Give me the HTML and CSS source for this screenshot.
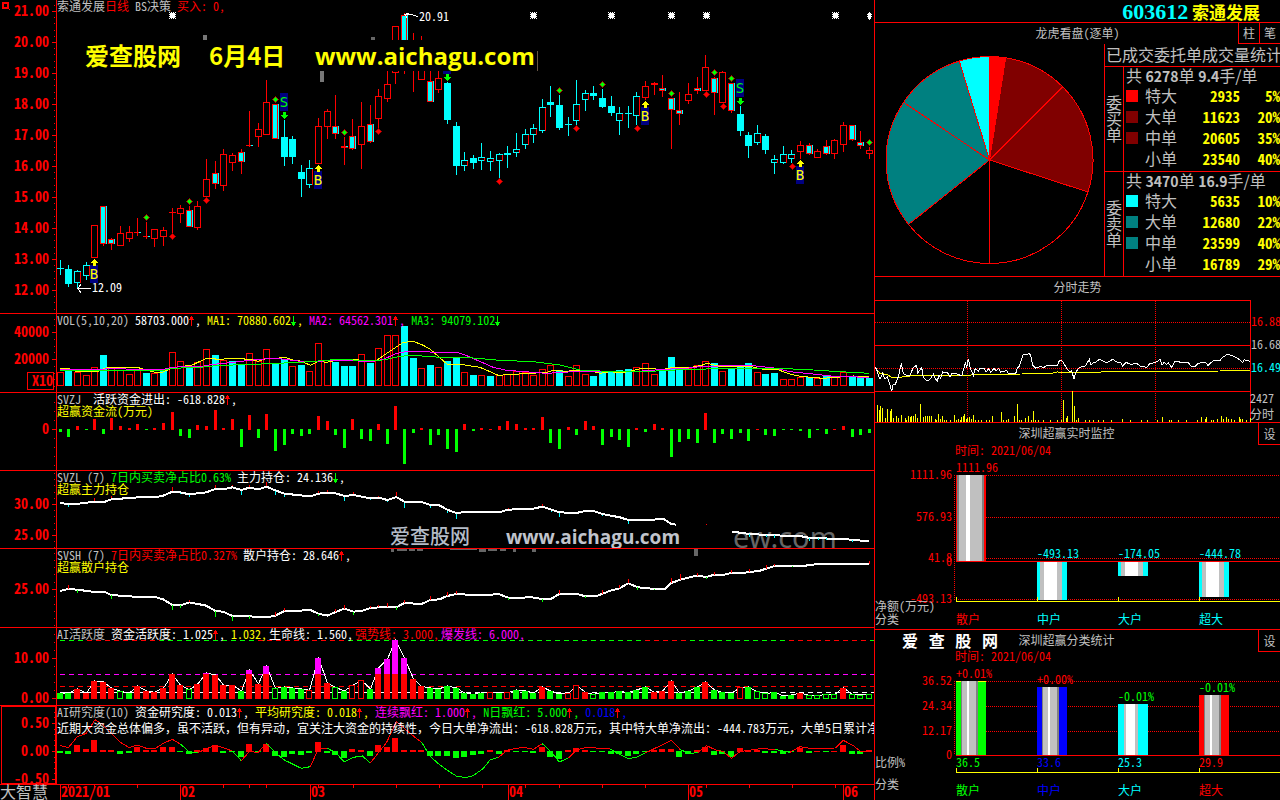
FILE: index.html
```html
<!DOCTYPE html>
<html lang="zh-CN">
<head>
<meta charset="utf-8">
<title>索通发展 603612</title>
<link rel="stylesheet" href="styles.css">
</head>
<body>
<main class="terminal">
  <div class="history">
    <section class="panel panel-first">
      <svg class="chart" id="price" viewBox="0 0 874 313"></svg>
      <header class="legend"><p><span class="gray">索通发展</span><span class="red">日线</span> <span class="gray">BS决策</span> <span class="red">买入: 0,</span></p></header>
    </section>
    <section class="panel">
      <svg class="chart" id="volume" viewBox="0 314 874 78"></svg>
      <header class="legend"><p><span class="gray">VOL(5,10,20)</span> 58703.000<i class="up"></i>, <span class="yellow">MA1: 70880.602<i class="down"></i>,</span> <span class="magenta">MA2: 64562.301<i class="up"></i>,</span> <span class="green">MA3: 94079.102<i class="down"></i></span></p></header>
    </section>
    <section class="panel">
      <svg class="chart" id="flow" viewBox="0 393 874 77"></svg>
      <header class="legend"><p><span class="gray">SVZJ</span>  活跃资金进出: -618.828<i class="up"></i>,</p><p class="yellow">超赢资金流(万元)</p></header>
    </section>
    <section class="panel">
      <svg class="chart" id="major" viewBox="0 471 874 77"></svg>
      <header class="legend"><p><span class="gray">SVZL (7)</span> <span class="green">7日内买卖净占比0.63%</span> 主力持仓: 24.136<i class="down"></i>,</p><p class="yellow">超赢主力持仓</p></header>
    </section>
    <section class="panel">
      <svg class="chart" id="retail" viewBox="0 549 874 78"></svg>
      <header class="legend"><p><span class="gray">SVSH (7)</span> <span class="red">7日内买卖净占比0.327%</span> 散户持仓: 28.646<i class="up"></i>,</p><p class="yellow">超赢散户持仓</p></header>
    </section>
    <section class="panel">
      <svg class="chart" id="activity" viewBox="0 628 874 77"></svg>
      <header class="legend"><p><span class="gray">AI活跃度</span> 资金活跃度: 1.025<i class="up"></i>, <span class="yellow plain">1.032,</span><span class="plain">生命线: 1.560,</span><span class="red plain">强势线: 3.000,</span><span class="magenta">爆发线: 6.000,</span></p></header>
    </section>
    <section class="panel">
      <svg class="chart" id="research" viewBox="0 706 874 78"></svg>
      <header class="legend"><p><span class="gray">AI研究度(10)</span> 资金研究度: 0.013<i class="up"></i>, <span class="yellow">平均研究度: 0.018<i class="up"></i>,</span> <span class="magenta">连续飘红: 1.000<i class="up"></i>,</span> <span class="green">N日飘红: 5.000<i class="up"></i>,</span> <span class="blue">0.018<i class="up"></i>,</span></p>
      <p class="comment">近期大资金总体偏多，虽不活跃，但有异动，宜关注大资金的持续性，今日大单净流出：-618.828万元，其中特大单净流出：-444.783万元，大单5日累计净流出</p></header>
    </section>
    <footer class="panel">
      <svg class="chart" id="months" viewBox="0 785 874 15"></svg>
    </footer>
  </div>

  <div class="quote">
    <h1 class="stock"><span class="code">603612</span> <span class="name">索通发展</span></h1>
    <section class="orders">
      <div class="title-row title-wide"><h2>龙虎看盘(逐单)</h2><button type="button">柱</button><button type="button">笔</button></div>
      <div class="orders-body">
        <svg class="chart" id="pie" viewBox="875 44 229 232"></svg>
        <div class="stats">
          <h3>已成交委托单成交量统计</h3>
          <div class="side">
            <p class="side-name">委买单</p>
            <table>
              <caption>共 <b>6278</b>单 <b>9.4</b>手/单</caption>
              <tr><td><i class="swatch s-red"></i></td><th>特大</th><td>2935</td><td>5%</td></tr>
              <tr><td><i class="swatch s-maroon"></i></td><th>大单</th><td>11623</td><td>20%</td></tr>
              <tr><td><i class="swatch s-maroon"></i></td><th>中单</th><td>20605</td><td>35%</td></tr>
              <tr><td></td><th>小单</th><td>23540</td><td>40%</td></tr>
            </table>
          </div>
          <div class="side">
            <p class="side-name">委卖单</p>
            <table>
              <caption>共 <b>3470</b>单 <b>16.9</b>手/单</caption>
              <tr><td><i class="swatch s-cyan"></i></td><th>特大</th><td>5635</td><td>10%</td></tr>
              <tr><td><i class="swatch s-teal"></i></td><th>大单</th><td>12680</td><td>22%</td></tr>
              <tr><td><i class="swatch s-teal"></i></td><th>中单</th><td>23599</td><td>40%</td></tr>
              <tr><td></td><th>小单</th><td>16789</td><td>29%</td></tr>
            </table>
          </div>
        </div>
      </div>
    </section>
    <section class="intraday">
      <h2>分时走势</h2>
      <svg class="chart" id="intraday" viewBox="875 300 405 122"></svg>
    </section>
    <section class="monitor">
      <div class="title-row"><h2>深圳超赢实时监控</h2><button type="button">设</button></div>
      <svg class="chart" id="monitor" viewBox="875 445 405 184"></svg>
    </section>
    <section class="monitor">
      <div class="title-row"><h2>深圳超赢分类统计</h2><button type="button">设</button></div>
      <p class="brand">爱 查 股 网</p>
      <svg class="chart" id="share" viewBox="875 652 405 148"></svg>
    </section>
  </div>
</main>
<script src="charts.js"></script>
</body>
</html>
```

FILE: styles.css
```css
* { box-sizing: border-box; margin: 0; padding: 0; }

body {
  background: #000;
  color: #fff;
  font: 12px/12px "Noto Sans Mono CJK SC", "Noto Sans CJK SC", monospace;
  overflow-x: hidden;
}

.terminal { display: grid; grid-template-columns: minmax(0, 875fr) minmax(0, 405fr); }
.history { border-right: 1px solid #f00; min-width: 0; }
.chart { display: block; width: 100%; height: auto; overflow: hidden; }
.chart text { white-space: pre; }
#share, #months { overflow: visible; }

.panel { display: grid; border-top: 1px solid #f00; }
.panel-first { border-top: 0; }
.panel > * { grid-area: 1 / 1; min-width: 0; }
.legend { padding-left: 57px; overflow-x: clip; }
.legend p { white-space: pre; }
.legend .comment { margin-top: 4px; }
.plain { margin-right: 2px; }

.gray { color: #c0c0c0; }
.red { color: #f00; }
.yellow { color: #ff0; }
.green { color: #0f0; }
.magenta { color: #f0f; }
.blue { color: #00f; }

.up, .down { display: inline-block; width: 5px; height: 10px; margin-right: 1px; vertical-align: -1px; }
.up { background: linear-gradient(#f00, #f00) center / 1px 100% no-repeat, linear-gradient(#f00, #f00) center 1px / 3px 3px no-repeat, linear-gradient(#f00, #f00) center 3px / 5px 1px no-repeat; }
.down { background: linear-gradient(#0f0, #0f0) center / 1px 100% no-repeat, linear-gradient(#0f0, #0f0) center 6px / 3px 3px no-repeat, linear-gradient(#0f0, #0f0) center 6px / 5px 1px no-repeat; }

h2, h3 { font-weight: 400; color: #c0c0c0; }
h2 { font-size: 12px; text-align: center; }

.stock {
  height: 23px;
  padding-right: 20px;
  border-bottom: 1px solid #f00;
  text-align: right;
  white-space: nowrap;
  font: 700 17px/23px "Noto Sans CJK SC", sans-serif;
}
.stock .code { color: #0ff; font: 700 22px/23px "Liberation Serif", serif; }
.stock .name { color: #ff0; }

.title-row { display: flex; }
.title-row h2 { flex: 1; line-height: 20px; }
.title-wide h2 { padding-left: 42px; }
.title-row button {
  width: 22px;
  height: 22px;
  background: #000;
  color: #c0c0c0;
  border: 0 solid #f00;
  border-width: 0 0 1px 1px;
  font: inherit;
}
.title-wide button { width: 21px; height: 21px; }

.orders { border-bottom: 1px solid #f00; }
.orders-body { display: grid; grid-template-columns: minmax(0, 229fr) minmax(0, 176fr); }
.stats { border-left: 1px solid #f00; overflow: hidden; white-space: nowrap; }
.stats h3 { font-size: 16px; line-height: 20px; height: 23px; padding-left: 1px; border-bottom: 1px solid #f00; }
.side { display: flex; }
.side + .side { border-top: 1px solid #f00; }
.side-name {
  width: 19px;
  padding: 27px 2px 0 1px;
  border-right: 1px solid #f00;
  color: #c0c0c0;
  font-size: 16px;
  line-height: 16px;
  white-space: normal;
  word-break: break-all;
}
.side table { flex: 1; border-collapse: collapse; table-layout: fixed; font-size: 16px; color: #c0c0c0; }
.side caption { height: 18px; line-height: 16px; text-align: left; padding-left: 2px; font-family: "Noto Sans CJK SC", sans-serif; }
.side caption b { font-size: 14px; }
.side th { font-weight: 400; text-align: left; }
.side td, .side th { height: 21px; line-height: 21px; }
.side td:nth-child(1) { width: 21px; padding-left: 2px; }
.side th { width: 32px; }
.side td:nth-child(n+3) { color: #ff0; font-weight: 700; font-size: 15px; text-align: right; }
.side td:nth-child(3) { width: 63px; }
.side table { margin-bottom: 2px; }
.swatch { display: block; width: 12px; height: 12px; }
.s-red { background: #f00; }
.s-maroon { background: #800000; }
.s-cyan { background: #0ff; }
.s-teal { background: #008080; }

.intraday { border-bottom: 1px solid #f00; }
.intraday h2 { height: 23px; line-height: 19px; }
.monitor { position: relative; }
.monitor + .monitor { border-top: 1px solid #f00; }
.brand {
  position: absolute;
  left: 27px;
  top: 1px;
  font: 700 16px/18px "Noto Sans CJK SC", sans-serif;
  word-spacing: 7px;
}
```

FILE: charts.js
```js
const NS = "http://www.w3.org/2000/svg";
const R = "#f00", C = "#0ff", G = "#0f0", Y = "#ff0", M = "#f0f", W = "#fff", S = "#c0c0c0";
const MONO = '"Noto Sans Mono CJK SC", "Noto Sans CJK SC", monospace';

function pen(id) {
  const svg = document.getElementById(id);
  const add = (tag, attrs) => {
    const el = document.createElementNS(NS, tag);
    for (const k in attrs) el.setAttribute(k, attrs[k]);
    svg.appendChild(el);
    return el;
  };
  return {
    add,
    rect: (x, y, w, h, fill) => add("rect", { x, y, width: w, height: Math.max(h, 1), fill, "shape-rendering": "crispEdges" }),
    box: (x, y, w, h, stroke, fill) => add("rect", { x: x + .5, y: y + .5, width: w - 1, height: Math.max(h - 1, 1), fill: fill || "#000", stroke, "shape-rendering": "crispEdges" }),
    line: (pts, stroke, w) => add("polyline", { points: pts.map(p => p.join(",")).join(" "), fill: "none", stroke, "stroke-width": w || 1, "shape-rendering": "crispEdges" }),
    dash: (x1, y1, x2, y2, stroke, d) => add("line", { x1, y1, x2, y2, stroke, "stroke-dasharray": d || "1 1", "shape-rendering": "crispEdges" }),
    text: (x, mid, s, fill, size, extra) => {
      size = size || 12;
      const el = add("text", Object.assign({ x, y: mid + Math.round(size * .36), fill, "font-size": size, "font-family": MONO }, extra));
      el.textContent = s;
      return el;
    }
  };
}

/* Day number to column; the data below is sampled on a grid of thirds. */
const col = i => 60 + Math.floor(i * 8.606 + .3);
const third = v => Math.floor(v / 3);
const pairs = (s, oy) => s.trim().split(/\s+/).map(p => {
  const [x, y] = p.split(",").map(Number);
  return [x / 3, oy + y / 3];
});

function axis(p, top, bottom, ticks, origin, step) {
  p.rect(56, top, 1, bottom - top, R);
  for (let y = origin; y < bottom; y += step) if (y > top) p.rect(54, Math.round(y), 1, 1, R);
  for (let y = origin; y > top; y -= step) if (y < bottom) p.rect(54, Math.round(y), 1, 1, R);
  ticks.forEach(([s, y]) => {
    p.rect(52, y, 4, 1, R);
    p.text(49, y, s, R, 14, { "text-anchor": "end", "font-weight": 700 });
  });
}

/* ---- price ---- */
const candles = `c780,804,809,825 c795,807,852,861 h810,813,849,865 h788,795,828,840 r675,675,774,774 m618,618,732,738
m715,717,732,750 r678,699,738,738 r678,696,719,726 m654,696,699,708 m666,708,713,718 r687,687,717,741 r681,690,711,738
r624,638,641,705 r615,624,642,669 m618,630,681,681 r603,618,685,690 r477,537,591,591 m483,519,552,567 r447,462,558,573
r459,465,489,513 m447,456,486,522 m333,435,438,441 r369,387,411,441 r240,306,405,405 m312,312,417,417 c360,411,471,498
c408,417,471,492 c495,516,537,591 h480,504,555,564 r354,378,492,492 r327,333,381,417 m285,378,402,417 m411,438,446,495
m357,408,447,450 r306,378,435,507 m315,372,426,429 r267,288,357,385 r210,252,297,306 r78,78,221,252 m40,45,210,222
r100,150,200,276 r110,140,240,240 m190,243,306,306 r200,234,270,279 c246,249,360,372 c366,378,498,525 h456,480,498,513
c465,474,489,507 h429,471,483,510 h453,474,486,513 h459,462,483,535 h438,459,467,504 h399,447,459,471 h387,402,435,447
h372,384,405,429 h297,321,393,399 c258,306,315,351 c285,315,384,390 c351,372,377,408 h240,312,363,375 h270,279,300,333
c258,279,288,300 c267,294,321,324 c288,318,339,348 h321,339,363,405 c318,339,344,384 h276,288,348,375 r243,258,294,300
r246,249,257,285 m225,264,273,291 m294,294,330,447 m276,330,342,375 r249,282,303,312 m231,264,273,282 r165,201,273,273
m231,234,279,345 r213,216,309,309 m249,249,333,339 c318,342,393,408 c396,405,438,474 h375,399,429,435 c402,408,450,462
h465,477,489,522 h438,462,489,492 h450,462,477,489 r423,435,456,477 m429,435,462,465 r447,453,474,474 m420,438,462,465
r417,420,462,477 r366,375,435,456 m375,375,420,423 m393,426,438,447 r441,450,462,477`.split(/\s+/);

(function price() {
  const p = pen("price");
  axis(p, 0, 313, ["21.00", "20.00", "19.00", "18.00", "17.00", "16.00", "15.00", "14.00", "13.00", "12.00"].map((s, i) => [s, 11 + 31 * i]), 11, 6.2);
  p.rect(2, 2, 7, 7, R);
  p.rect(4, 4, 3, 3, "#000");
  p.rect(9, 9, 1, 1, R);
  candles.forEach((s, i) => {
    const kind = s[0], [hi, top, bot, lo] = s.slice(1).split(",").map(third);
    const x = col(i), color = kind === "r" || kind === "m" ? R : C, h = bot - top;
    p.rect(x, hi, 1, lo - hi, color);
    if (h < 3) { p.rect(x - 3, top, 7, h, color); if (kind === "m") p.rect(x + 2, top, 2, 1, C); return; }
    if (kind === "c") p.rect(x - 3, top, 7, h, C);
    else if (kind === "m") { p.box(x - 3, top, 6, h, R, C); p.rect(x + 3, top, 1, h, C); }
    else p.box(x - 3, top, 7, h, color);
    if (kind === "h") p.rect(x + 3, top + 1, 1, h - 1, R);
  });
  const diamond = (x, y, fill, edge) => {
    x = third(x); y = third(y);
    p.rect(x - 3, y, 7, 1, edge); p.rect(x, y - 3, 1, 7, edge);
    p.rect(x - 2, y - 1, 5, 3, edge); p.rect(x - 1, y - 2, 3, 5, edge);
    p.rect(x - 2, y, 5, 1, fill); p.rect(x, y - 2, 1, 5, fill); p.rect(x - 1, y - 1, 3, 3, fill);
  };
  [[826, 298], [568, 604], [439, 652], [1033, 397], [1678, 271], [1807, 253], [2014, 280], [2143, 217], [2194, 235], [2608, 427]].forEach(d => diamond(d[0], d[1], G, "#a00000"));
  [[517, 709], [619, 601], [1135, 394], [1498, 544], [1729, 385], [1912, 385], [2119, 283], [2170, 319], [2377, 499]].forEach(d => diamond(d[0], d[1], R, "#a00000"));
  [[517, 0], [1600, 0], [1834, 0], [2014, 0], [2119, 0], [2506, 0], [2608, 1]].forEach(([x, slim]) => {
    x = third(x);
    if (slim) { p.rect(x - 1, 13, 3, 6, W); p.rect(x, 12, 1, 8, W); p.rect(x - 2, 14, 5, 1, W); p.rect(x - 2, 16, 5, 1, W); return; }
    p.rect(x - 2, 13, 5, 5, W);
    [-3, -1, 1, 3].forEach(d => { p.rect(x + d, 12, 1, 1, W); p.rect(x + d, 18, 1, 1, W); });
    p.rect(x - 3, 14, 7, 1, W); p.rect(x - 3, 16, 7, 1, W);
  });
  const arrow = (x, y, up, color) => {
    x = third(x); y = third(y);
    const d = up ? 1 : -1;
    for (let k = 0; k < 4; k++) p.rect(x - k, y - d * 3 + d * k, 2 * k + 1, 1, color);
    p.rect(x - 1, up ? y + 1 : y - 3, 3, 3, color);
  };
  const tag = (x, y, letter, color, arrowY) => {
    p.rect(third(x) - 4, third(y), 8, 18, "#000080");
    p.text(third(x), third(y) + 9, letter, color, 14, { "text-anchor": "middle", "font-family": '"DejaVu Sans Mono", monospace' });
    arrow(x, arrowY, letter === "B", color);
  };
  tag(283, 795, "B", Y, 786); tag(955, 513, "B", Y, 504); tag(1936, 321, "B", Y, 312); tag(2401, 498, "B", Y, 489);
  tag(853, 279, "S", G, 346); tag(2221, 237, "S", G, 304);
  p.rect(443, 71, 8, 3, "#000080");
  arrow(1342, 232, false, G);
  p.line([[77, 288.5], [91, 288.5]], W); p.line([[81, 284.5], [77.5, 288.5], [81, 292.5]], W);
  p.text(92, 288, "12.09", W);
  p.line([[405, 14.5], [411, 14.5], [418, 16.5]], W); p.line([[407, 18], [405, 14.5], [409, 13]], W);
  p.text(419, 17, "20.91", W);
  p.rect(57, 40, 480, 31, "#000");
  const bold = { "font-weight": 700, "font-family": '"Noto Sans CJK SC", sans-serif' };
  p.text(85, 56, "爱查股网", Y, 24, bold);
  p.text(209, 56, "6月4日", Y, 24, bold);
  p.text(315, 56, "www.aichagu.com", Y, 24, { "font-weight": 700, "font-family": '"Open Sans", "Noto Sans", sans-serif' });
  p.rect(203, 35, 4, 5, "#777"); p.rect(371, 37, 4, 3, "#666"); p.rect(320, 71, 4, 11, "#777"); p.rect(537, 51, 1, 20, "#654");
})();

/* ---- volume ---- */
(function volume() {
  const p = pen("volume");
  axis(p, 314, 392, [["40000", 332], ["20000", 359]], 332, 6.75);
  `r202 c195 r202 r210 r187 c150 r190 r195 r207 r195 c204 r205 c198 r142 r169 c186 r172 r133 c150 r165 c170 c180 r145 r168 r133
  c177 c162 r184 c180 r198 r114 r166 c171 c183 c183 r148 c174 r130 r91 r91 c63 c159 r190 c180 r187 c168 c157 r202 c210 r210 c213
  r210 r208 r198 r202 r210 r193 r180 c195 r214 r181 r207 c213 c200 c201 c195 c192 r187 r175 r208 c198 c156 c189 r190 r181 r169
  c174 r198 c192 c186 c174 r202 c207 c204 r223 r223 r217 c216 r220 c210 r216 r202 c216 c217 c219`.trim().split(/\s+/).forEach((s, i) => {
    const y = 305 + third(+s.slice(1));
    if (s[0] === "c") p.rect(col(i) - 3, y, 7, 386 - y, C); else p.box(col(i) - 3, y, 7, 386 - y, R);
  });
  p.line(pairs(`181,190 205,190 232,200 290,201 320,188 415,188 440,195 465,202 490,201 517,188 545,184 575,181 619,160 660,163 700,160
  750,163 775,169 799,160 830,160 853,157 880,165 905,169 931,181 955,169 980,172 1010,166 1060,163 1085,166 1130,166 1160,145 1210,112
  1240,109 1270,121 1291,133 1318,157 1342,178 1380,178 1440,187 1495,211 1540,208 1590,205 1640,202 1660,196 1700,199 1720,196 1780,200
  1800,205 1830,200 1860,204 1890,199 1925,190 1990,193 2020,187 2060,187 2080,186 2105,181 2120,175 2160,184 2250,184 2290,193 2330,193
  2370,207 2400,214 2470,220 2520,216 2560,213 2608,214`, 305), Y);
  p.line(pairs(`181,193 290,193 340,191 415,193 440,195 490,193 517,187 560,184 600,185 640,178 700,172 775,163 830,160 870,165 900,169
  955,171 980,166 1120,169 1150,163 1190,145 1225,139 1320,142 1370,142 1400,152 1480,187 1520,196 1600,202 1640,205 1720,200 1900,200
  1990,193 2060,190 2105,184 2250,181 2330,190 2370,200 2440,207 2500,214 2608,217`, 305), M);
  p.line(pairs(`181,196 490,196 517,190 600,187 640,183 700,180 760,178 830,175 900,172 980,166 1010,163 1085,166 1150,165 1200,154
  1240,151 1320,157 1420,159 1500,166 1600,170 1680,180 1740,195 1800,198 1920,201 2000,196 2080,193 2200,190 2340,190 2440,195 2520,200 2608,205`, 305), G);
  p.box(27, 372, 27, 18, R);
  p.text(53, 381, "X10", R, 14, { "text-anchor": "end", "font-weight": 700 });
})();

/* ---- money flow ---- */
(function flow() {
  const p = pen("flow");
  axis(p, 393, 470, [["0", 429]], 429, 9);
  `381 396 363 375 342 387 339 363 369 357 375 369 354 321 393 399 360 363 315 369 342 426 330 399 327 438 420 387 393 387 333 348
  390 429 342 402 408 357 417 303 477 384 369 420 390 432 441 357 378 369 372 363 348 357 369 369 336 414 432 366 390 348 363 420
  396 405 426 369 381 357 369 456 411 402 414 324 414 387 402 384 408 372 390 393 375 375 378 399 375 387 372 363 396 390 384`
    .trim().split(/\s+/).forEach((v, i) => {
      const y = 305 + third(+v);
      if (+v > 373) p.rect(col(i) - 1, 429, 3, y - 429, G); else p.rect(col(i) - 1, y, 3, 430 - y, R);
    });
})();

function whiskers(p, list, oy, from, color) {
  list.trim().split(/\s+/).forEach(s => {
    const [x, y] = s.split(",").map(Number);
    let k = 0;
    while (k < from.length - 2 && from[k + 1][0] < x / 3) k++;
    const a = from[k], b = from[k + 1], t = (x / 3 - a[0]) / (b[0] - a[0]);
    const base = a[1] + (b[1] - a[1]) * t, tip = oy + y / 3;
    p.rect(third(x), Math.min(base, tip), 1, Math.abs(base - tip), color);
  });
}

/* ---- major holdings ---- */
(function major() {
  const p = pen("major");
  axis(p, 471, 548, [["30.00", 504], ["25.00", 535]], 504, 6.2);
  const sans = '"Noto Sans", sans-serif';
  p.text(733, 538, "ew.com", "#666", 29, { "font-family": sans });
  const a = pairs(`181,114 205,117 235,116 285,110 312,111 334,103 415,97 465,97 490,92 517,80 541,82 568,88 619,82 646,72 670,73 697,67
  724,75 748,68 775,73 799,65 826,76 853,86 931,94 955,86 980,83 1007,85 1033,93 1060,90 1111,100 1138,98 1162,105 1189,96 1213,110
  1265,111 1291,120 1318,121 1342,134 1369,144 1396,141 1500,141 1525,134 1600,131 1627,125 1654,134 1678,142 1729,144 1756,138
  1783,139 1807,147 1860,157 1885,165 1960,164 1990,161 2014,177 2028,179`, 465);
  const b = pairs("2196,200 2250,207 2320,211 2400,213 2430,219 2530,222 2608,229", 465);
  whiskers(p, "283,98 334,93 517,66 646,60 697,60 748,60 799,52 955,78 982,76 1060,82 1135,92 1189,81 1396,138 1525,128 1549,130 1627,117 1756,136", 465, a, R);
  whiskers(p, "205,125 541,88 568,95 724,89 826,89 853,95 931,97 1033,107 1111,106 1162,112 1213,129 1291,128 1342,143 1369,161 1420,145 1654,140 1678,155 1729,148 1807,154 1885,176", 465, a, C);
  p.line(a, W, 2); p.line(b, W, 2);
  whiskers(p, "2248,215 2299,217 2323,219 2428,228 2455,224 2479,225 2557,230", 465, b, C);
  p.rect(706, 524, 1, 1, R);
  p.rect(385, 526, 347, 22, "#000");
  p.text(390, 537, "爱查股网", "#b4bcc8", 20, { "font-weight": 500, "font-family": '"Noto Sans CJK SC", sans-serif' });
  p.text(506, 537, "www.aichagu.com", "#c0c4cc", 19, { "font-weight": 700, "font-family": '"Open Sans", "Noto Sans", sans-serif' });
})();

/* ---- retail holdings ---- */
(function retail() {
  const p = pen("retail");
  axis(p, 549, 627, [["25.00", 589]], 589, 7.3);
  [[391, 3, 3], [397, 10, 2], [409, 6, 2], [417, 6, 2], [450, 27, 1], [479, 7, 3], [488, 9, 2], [500, 6, 2], [513, 3, 3], [532, 4, 3], [694, 4, 7]].forEach(([x, w, h]) => p.rect(x, 549, w, h, "#666"));
  const a = pairs(`181,378 205,372 232,374 283,381 312,380 334,390 415,396 465,396 490,403 517,420 541,421 568,412 619,422 646,438 670,440
  697,453 775,455 799,457 826,452 853,438 880,438 931,435 955,446 982,452 1007,441 1033,431 1060,440 1087,437 1111,429 1162,425 1189,427
  1213,414 1265,417 1291,405 1318,403 1342,393 1369,387 1420,390 1498,388 1525,398 1549,400 1590,396 1627,402 1654,401 1678,387 1729,386
  1756,394 1790,393 1834,376 1858,370 1885,355 1912,366 1936,370 1995,372 2014,354 2041,344 2090,332 2119,336 2143,329 2170,330 2194,324
  2221,325 2280,317 2323,303 2400,304 2455,297 2608,296`, 465);
  p.line(a, W, 2);
  whiskers(p, "205,360 568,405 826,442 853,430 1007,432 1033,420 1111,424 1135,420 1162,414 1213,405 1291,393 1342,381 1369,378 1678,375 1807,376 1858,360 1885,342 2014,339 2041,327 2092,323 2143,321 2194,315 2248,312 2299,300 2323,297 2607,288", 465, a, R);
  whiskers(p, "232,383 334,403 517,435 541,428 646,455 697,467 748,461 955,452 1060,450 1189,434 1525,404 1627,410 1756,398 1912,374 1963,376 2119,343 2377,307", 465, a, G);
})();

/* ---- activity ---- */
(function activity() {
  const p = pen("activity");
  axis(p, 628, 705, [["10.00", 658], ["0.00", 698]], 658, 8);
  p.dash(60, 640.5, 874, 640.5, G, "5 4");
  p.dash(87, 640.5, 160, 640.5, R, "5 4"); p.dash(258, 640.5, 345, 640.5, R, "5 4"); p.dash(645, 640.5, 688, 640.5, R, "5 4"); p.dash(789, 640.5, 868, 640.5, R, "5 4");
  p.dash(60, 674.5, 874, 674.5, M, "5 4");
  p.dash(60, 686.5, 874, 686.5, R, "5 4");
  p.line([[60, 692.5], [430, 692.5]], W);
  p.dash(430, 692.5, 874, 692.5, W, "5 4");
  const bars = `G204 G204 R192 R204 R168 R171 R189 g199 G204 R183 R198 R202 R189 R148 R180 g194 R178 R144 R150 R180 R180 G198 R135 R177 R123
  g190 G186 G189 G192 r196 R99 R174 g187 G198 r181 r166 G192 R129 R102 R45 R99 R162 R184 G189 G192 G183 G189 G204 G208 G204 r203
  G204 r203 G195 G198 G204 R186 G198 G207 r205 r181 R202 g208 G202 G202 G200 G202 G195 G186 R202 R198 R168 G204 G198 G186 R171
  G195 G202 G205 r187 G186 g200 g206 G202 G213 G210 R204 g211 g211 g209 g208 R189 g208 g210 g208`.trim().split(/\s+/);
  p.line(bars.map((s, i) => [col(i) + .5, 625 + s.slice(1) / 3]), W);
  bars.forEach((s, i) => {
    const y = 625 + third(+s.slice(1)), x = col(i) - 3, k = s[0];
    if (k === "r") p.box(x, y, 6, 699 - y, R);
    else if (k === "g") p.box(x, y, 6, 699 - y, G);
    else p.rect(x, y, 6, 699 - y, k === "R" ? R : G);
    if (y < 674) p.rect(x, y, 6, 674 - y, M);
  });
})();

/* ---- research ---- */
(function research() {
  const p = pen("research");
  axis(p, 706, 784, [["0.50", 723], ["0.00", 751], ["-0.50", 779]], 723, 5.6);
  p.add("rect", { x: 1.5, y: 706.5, width: 54, height: 77, fill: "none", stroke: R });
  `384 387 360 372 345 375 375 387 384 366 375 377 366 366 381 387 376 369 360 384 381 396 357 381 357 393 396 387 390 384 351 384
  390 399 372 377 393 360 366 339 377 375 377 393 393 393 399 396 390 387 375 387 375 381 381 384 366 396 402 375 371 376 383 383 387
  387 393 388 381 375 372 372 396 387 375 366 390 387 396 369 375 375 384 384 387 381 369 384 378 383 378 360 387 387 375`
    .trim().split(/\s+/).forEach((v, i) => {
      const y = 625 + third(+v);
      if (+v > 379) p.rect(col(i) - 3, 751, 6, y - 751, G); else p.rect(col(i) - 3, y, 6, 752 - y, R);
    });
  [[R, "181,362 205,368 232,335 259,325 285,284 310,300 334,325 361,352 388,368 412,360 439,370 466,370 490,355 517,343 541,357"],
   [G, "541,357 568,381 595,382"], [R, "595,382 646,360 697,378"], [G, "697,378 724,407"], [R, "724,407 748,380 775,382 799,355"],
   [G, "799,355 826,383 853,405 904,430 931,425"], [R, "931,425 955,372 982,370"],
   [G, "982,370 1007,383 1033,411 1060,397 1087,393 1111,414"], [R, "1111,414 1138,380 1160,352 1189,290 1213,310 1240,333 1265,352"],
   [G, "1265,352 1291,395 1320,420 1342,436 1369,453 1396,458 1420,452 1450,430 1470,405 1495,397"],
   [R, "1495,397 1525,374 1570,367 1600,373 1627,356"], [G, "1627,356 1654,381 1678,411 1705,399"],
   [R, "1705,399 1729,375 1760,367 1830,372"], [G, "1830,372 1860,388 1885,401 1910,397 1936,384"],
   [R, "1936,384 2014,346 2041,374"], [G, "2041,374 2070,386 2095,382"],
   [R, "2095,382 2120,362 2145,374 2170,380 2194,400 2220,380 2280,371 2325,373"], [G, "2325,373 2370,382"],
   [R, "2370,382 2400,365 2430,370 2506,369 2530,346 2560,362 2580,378 2608,380"]
  ].forEach(([c, s]) => p.line(pairs(s, 625), c));
})();

/* ---- month axis ---- */
(function months() {
  const p = pen("months");
  p.text(0, 792, "大智慧", S, 16);
  [["2021/01", 60], ["02", 180], ["03", 310], ["04", 508], ["05", 688], ["06", 843]].forEach(([s, x]) => {
    p.rect(x, 785, 1, 15, R);
    p.text(x + 1, 792, s, R, 14, { "font-weight": 700 });
  });
  [205, 283, 412, 670, 748, 799, 955, 1060, 1189, 1318, 1447, 1576, 1678, 1807, 1936, 2120, 2248, 2377, 2506].forEach(x => p.rect(third(x), 785, 1, 3, R));
})();

/* ---- order pie ---- */
(function pie() {
  const p = pen("pie"), cx = 989.5, cy = 160, r = 103.5;
  const at = d => [cx + r * Math.sin(d * Math.PI / 180), cy - r * Math.cos(d * Math.PI / 180)];
  [[0, 9, R], [9, 45, "#800000"], [45, 108, "#800000"], [108, 180, "#000"], [180, 231.5, "#000"], [231.5, 303.9, "#008080"], [303.9, 343, "#008080"], [343, 360, C]].forEach(([a, b, fill]) => {
    const s = at(a), e = at(b);
    p.add("path", { d: `M${cx} ${cy}L${s[0]} ${s[1]}A${r} ${r} 0 0 1 ${e[0]} ${e[1]}Z`, fill, stroke: R, "shape-rendering": "crispEdges" });
  });
  p.rect(988, 57, 1, 97, C);
})();

/* ---- intraday ---- */
(function intraday() {
  const p = pen("intraday");
  p.rect(875, 300, 376, 1, R); p.rect(1250, 300, 1, 122, R); p.rect(875, 345, 375, 1, R); p.rect(875, 391, 375, 1, R);
  p.dash(875, 322.5, 1250, 322.5, R); p.dash(875, 368.5, 1250, 368.5, R);
  [967.5, 1061.5, 1155.5].forEach(x => p.dash(x, 301, x, 421, R));
  const at = s => pairs(s, 280).map(([x, y]) => [x + 870, y]);
  p.line(at("15,262 30,280 52,284 65,292 85,294 100,290 140,286 300,286 310,283 455,282 550,279 560,276 640,277 750,275 1050,273 1060,270 1140,270"), Y);
  p.line(at(`15,262 20,268 25,285 30,297 38,280 45,297 52,290 60,315 65,333 70,312 75,315 85,290 94,250 100,280 110,287 120,286 130,262
  140,256 143,280 155,262 160,293 172,303 180,298 190,283 196,297 202,303 207,285 212,295 218,276 232,277 240,290 245,281 262,282 275,288
  286,250 290,262 295,236 300,262 310,287 316,265 325,273 330,265 342,265 348,277 356,266 362,277 372,265 378,272 386,265 392,276 410,272
  414,280 437,281 442,265 448,258 459,224 470,225 476,220 482,226 488,256 497,264 512,259 520,264 530,256 563,256 568,242 576,242 590,265
  598,275 605,272 612,297 616,280 625,265 635,260 646,258 658,238 663,256 670,247 678,246 688,238 700,243 710,249 728,238 742,247 752,247
  758,258 768,247 782,253 800,250 810,258 830,262 840,250 850,249 862,244 870,238 876,256 882,247 890,253 895,249 905,262 915,244 935,247
  955,248 965,260 975,260 985,250 1005,246 1014,256 1030,242 1050,241 1058,232 1072,223 1090,228 1103,235 1118,247 1122,239 1140,244`), W);
  `22,375 27,390 31,378 37,384 46,415 53,388 60,393 65,388 70,415 78,410 86,415 94,405 105,415 110,420 115,408 120,412 125,408 130,410 135,402
  142,415 151,372 160,412 165,410 172,410 178,410 185,410 195,418 200,422 205,402 211,418 217,408 224,422 230,422 240,422 253,405 259,420
  265,418 270,420 275,413 279,410 283,402 288,418 292,415 298,411 304,418 310,405 316,422 325,422 334,420 350,420 359,422 367,410 394,396
  400,422 410,420 416,418 433,408 442,372 448,420 455,420 466,415 475,408 484,420 490,393 496,422 505,420 520,422 541,420 562,422 574,420
  580,360 588,416 592,408 607,333 613,378 618,422 625,415 646,420 658,422 670,422 685,422 700,422 725,422 757,417 781,422 814,422 832,420
  862,420 877,413 898,422 905,420 925,422 950,422 982,422 994,413 1006,418 1010,411 1024,420 1030,420 1042,418 1054,410 1060,418 1069,411
  1076,417 1085,418 1094,420 1108,413 1112,417 1118,418 1128,420 1140,415`.trim().split(/\s+/).forEach(s => {
    const [x, y] = s.split(",").map(third);
    p.rect(870 + x, 280 + y, 1, 142 - y, Y);
  });
  p.text(1251, 322, "16.88", R); p.text(1251, 345, "16.68", S); p.text(1251, 368, "16.49", C);
  p.text(1250, 399, "2427", S); p.text(1250, 415, "分时", S);
})();

/* ---- category bars ---- */
function bar(p, x, y, h, bands) {
  let at = x;
  bands.forEach(([w, c]) => { p.rect(at, y, w, h, c); at += w; });
}
const MID = "#808080", POS = [956, 1037, 1118, 1199];
const right = { "text-anchor": "end" };

(function monitor() {
  const p = pen("monitor");
  p.text(955, 451, "时间: 2021/06/04", R);
  p.dash(954.5, 475, 954.5, 600, R);
  [475.5, 517.5, 558.5, 599.5].forEach(y => p.dash(956, y, 1280, y, R));
  p.rect(956, 561, 324, 1, R);
  [["1111.96", 475], ["576.93", 517], ["41.8", 558], ["0", 562], ["-493.13", 599]].forEach(([s, y]) => p.text(952, y, s, R, 12, right));
  bar(p, 956, 475, 86, [[1, R], [2, MID], [7, S], [4, W], [12, S], [2, MID], [2, R]]);
  bar(p, 1037, 562, 38, [[3, C], [4, S], [13, W], [5, S], [5, C]]);
  bar(p, 1118, 562, 14, [[3, C], [4, S], [13, W], [5, S], [5, C]]);
  bar(p, 1199, 562, 35, [[3, C], [4, S], [13, W], [5, S], [5, C]]);
  p.rect(956, 601, 324, 1, Y);
  POS.forEach(x => p.rect(x, 597, 1, 4, Y));
  p.text(956, 468, "1111.96", R);
  ["-493.13", "-174.05", "-444.78"].forEach((s, i) => p.text(POS[i + 1], 554, s, C));
  p.text(875, 607, "净额(万元)", S); p.text(875, 620, "分类", S);
  ["散户", "中户", "大户", "超大"].forEach((s, i) => p.text(POS[i], 620, s, i ? C : R));
})();

(function share() {
  const p = pen("share");
  p.text(955, 657, "时间: 2021/06/04", R);
  p.dash(954.5, 681, 954.5, 755, R);
  [681.5, 706.5, 731.5].forEach(y => p.dash(956, y, 1280, y, R));
  [["36.52", 681], ["24.34", 706], ["12.17", 731], ["0", 755]].forEach(([s, y]) => p.text(952, y, s, R, 12, right));
  bar(p, 956, 681, 74, [[5, G], [1, MID], [5, S], [2, W], [7, S], [2, MID], [8, G]]);
  p.rect(956, 681, 5, 1, Y); p.rect(978, 681, 8, 1, Y);
  bar(p, 1037, 687, 68, [[5, "#00f"], [1, MID], [5, S], [2, W], [7, S], [2, MID], [8, "#00f"]]);
  bar(p, 1118, 704, 51, [[6, C], [2, S], [9, W], [3, S], [10, C]]);
  bar(p, 1199, 695, 60, [[5, R], [1, MID], [5, S], [2, W], [7, S], [2, MID], [8, R]]);
  p.rect(956, 755, 324, 1, R);
  p.rect(956, 772, 324, 1, Y);
  POS.forEach(x => p.rect(x, 768, 1, 4, Y));
  [["+0.01%", 674, R], ["+0.00%", 680, R], ["-0.01%", 697, G], ["-0.01%", 688, G]].forEach(([s, y, c], i) => p.text(POS[i], y, s, c));
  const tint = [G, "#00f", C, R];
  ["36.5", "33.6", "25.3", "29.9"].forEach((s, i) => p.text(POS[i], 763, s, tint[i]));
  ["散户", "中户", "大户", "超大"].forEach((s, i) => p.text(POS[i], 791, s, tint[i]));
  p.text(875, 763, "比例%", S); p.text(875, 785, "分类", S);
})();
```
